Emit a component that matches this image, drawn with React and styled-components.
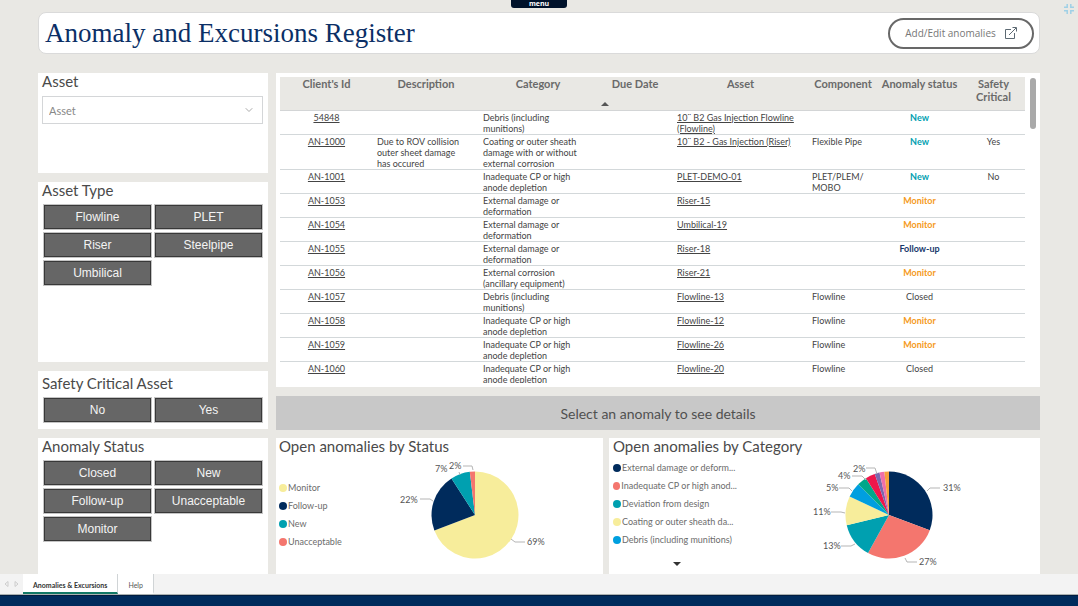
import React from "react";
import styled, { createGlobalStyle } from "styled-components";
import { ChevronDown } from "lucide-react";

const humanist = `Lato, "Trebuchet MS", "Noto Sans", sans-serif`;
const navy = "#002b5c";

const GlobalStyle = createGlobalStyle`
  * { box-sizing: border-box; }
  body { margin: 0; background: #e9e8e4; font-family: ${humanist}; color: #444; }
  button, select { font-family: inherit; }
`;

const Page = styled.div`
  min-height: 100vh;
  display: flex;
  flex-direction: column;
`;

const TopStrip = styled.div`
  height: 12px;
  display: grid;
  grid-template-columns: 1fr auto 1fr;
  align-items: start;
`;

const MenuTab = styled.button`
  width: 56px;
  height: 8px;
  padding: 0;
  border: 0;
  border-radius: 0 0 3px 3px;
  background: #00122b;
  color: #fff;
  font: bold 7px/6px "Open Sans", sans-serif;
`;

const CollapseButton = styled.button`
  justify-self: end;
  display: flex;
  padding: 4px 4px 0;
  border: 0;
  background: none;
`;

const Header = styled.header`
  margin: 0 38px 19px;
  height: 42px;
  padding: 0 5px 0 6px;
  display: flex;
  align-items: center;
  justify-content: space-between;
  background: #fff;
  border: 1px solid #dadada;
  border-radius: 8px;
`;

const Title = styled.h1`
  margin: 0;
  font: 400 27px/40px "Liberation Serif", serif;
  color: #0b2f66;
`;

const EditButton = styled.button`
  height: 31px;
  width: 146px;
  display: flex;
  align-items: center;
  justify-content: center;
  gap: 8px;
  border: 2px solid #686868;
  border-radius: 16px;
  background: #fff;
  color: #777;
  font: 400 10px/14px "Open Sans", sans-serif;
  padding: 0;
  white-space: nowrap;
`;

const Main = styled.main`
  flex: 1;
  display: grid;
  grid-template-columns: 230px minmax(0, 1fr);
  gap: 8px;
  padding: 0 38px;
`;

const Filters = styled.div`
  display: flex;
  flex-direction: column;
  gap: 9px;
`;

const Report = styled.div`
  display: flex;
  flex-direction: column;
`;

const Panel = styled.section`
  background: #fff;
  min-height: ${(p) => p.$min || 0}px;
  padding: ${(p) => p.$top || 0}px 4px 0;
  flex-grow: ${(p) => (p.$grow ? 1 : 0)};
`;

const PanelTitle = styled.h2`
  display: block;
  margin: 0 0 6px;
  font-size: 15px;
  line-height: 17px;
  font-weight: 400;
  color: #4a4a4a;
  white-space: nowrap;
`;

const SelectBox = styled.div`
  position: relative;
  margin-right: 1px;
  color: #aaa;
  svg {
    position: absolute;
    right: 8px;
    top: 8px;
    pointer-events: none;
  }
`;

const Select = styled.select`
  appearance: none;
  display: block;
  width: 100%;
  height: 28px;
  padding: 0 6px;
  border: 1px solid #d4d6d8;
  border-radius: 0;
  background: #fff;
  color: #888;
  font-size: 11px;
`;

const Slicer = styled.div`
  display: grid;
  grid-template-columns: 1fr 1fr;
  gap: 4px;
  padding: 0 2px;
`;

const SlicerButton = styled.button`
  height: 24px;
  padding: 0;
  border: 1px solid #383838;
  outline: 1px solid #c4c4c4;
  outline-offset: 0;
  background: #666;
  color: #f4f4f4;
  font: 400 12px/20px "Liberation Sans", sans-serif;
`;

const TablePanel = styled.section`
  display: flex;
  gap: 5px;
  height: 314px;
  padding: 4px;
  background: #fff;
`;

const TableScroll = styled.div`
  flex: 1;
  min-width: 0;
  overflow: hidden;
`;

const ScrollTrack = styled.div`
  width: 6px;
  margin-top: 1px;
`;

const ScrollThumb = styled.div`
  height: 51px;
  border-radius: 3px;
  background: #a9a9a9;
`;

const Table = styled.table`
  width: 100%;
  table-layout: fixed;
  border-collapse: collapse;
  font-size: 9px;
  line-height: 11px;
`;

const HeadCell = styled.th`
  height: 33px;
  padding: 0;
  vertical-align: top;
  background: #e9e8e4;
  border-bottom: 1px solid #d3d5d6;
  color: #6a6a6a;
  font-size: 11px;
  line-height: 13px;
  font-weight: 700;
`;

const SortMark = styled.span`
  display: block;
  width: 0;
  margin: 12px 0 0 4px;
  border: 4px solid transparent;
  border-top: 0;
  border-bottom: 4px solid #555;
`;

const statusColors = { New: "#00a0b0", Monitor: "#f59b23", "Follow-up": "#17386b", Closed: "#444" };

const Cell = styled.td`
  padding: ${(p) => (p.$center ? "1px 4px 0" : "1px 10px 0 4px")};
  vertical-align: top;
  border-bottom: 1px solid #d3d8da;
  text-align: ${(p) => (p.$center ? "center" : "left")};
  color: ${(p) => p.$color || "#444"};
  font-weight: ${(p) => (p.$strong ? 700 : 400)};
`;

const CellLink = styled.a`
  color: #444;
  text-decoration: underline;
`;

const DetailsButton = styled.button`
  margin: 9px 0 8px;
  height: 34px;
  padding: 0;
  border: 0;
  background: #c8c8c8;
  color: #505050;
  font-size: 14px;
`;

const Charts = styled.div`
  flex: 1;
  display: grid;
  grid-template-columns: 327fr 431fr;
  gap: 6px;
`;

const ChartPanel = styled.section`
  display: flex;
  flex-direction: column;
  padding: 0 0 0 ${(p) => p.$inset}px;
  background: #fff;
`;

const ChartTitle = styled(PanelTitle)`
  margin: 0;
`;

const ChartBody = styled.div`
  display: flex;
  flex: 1;
`;

const Legend = styled.div`
  width: ${(p) => p.$width}px;
  padding-top: ${(p) => p.$top}px;
`;

const LegendList = styled.ul`
  margin: 0;
  padding: 0;
  list-style: none;
  font-size: 9px;
  line-height: 18px;
  color: #6c6c6c;
`;

const LegendItem = styled.li`
  display: flex;
  align-items: center;
  gap: 1px;
  white-space: nowrap;
  &::before {
    content: "";
    width: 8px;
    height: 8px;
    border-radius: 50%;
    background: ${(p) => p.$color};
  }
`;

const MoreButton = styled.button`
  display: block;
  margin: 13px 0 0 60px;
  padding: 0;
  border: 4px solid transparent;
  border-bottom: 0;
  border-top: 4px solid #333;
  width: 0;
  height: 0;
  background: none;
`;

const PieBox = styled.div`
  flex: 1;
  display: flex;
  justify-content: center;
  align-items: flex-start;
  text {
    font-size: 9px;
    fill: #555;
  }
`;

const Tabs = styled.nav`
  height: 21px;
  display: flex;
  background: #f3f3f3;
  border-bottom: 1px solid #aab0b0;
`;

const TabArrows = styled.div`
  width: 23px;
  display: flex;
  align-items: center;
  justify-content: space-evenly;
`;

const Tab = styled.a`
  padding: 0 10px;
  border-right: 1px solid #d0d4d6;
  border-bottom: 2px solid ${(p) => (p.$active ? "#117865" : "#fff")};
  background: #fff;
  color: ${(p) => (p.$active ? "#333" : "#555")};
  font-size: 7px;
  font-weight: ${(p) => (p.$active ? 700 : 400)};
  line-height: 22px;
  text-decoration: none;
`;

const Footer = styled.footer`
  height: 11px;
  background: ${navy};
  border-top: 1px solid #001c40;
`;

const columns = [93, 106, 118, 76, 135, 70, 83, 65];
const headings = ["Client's Id", "Description", "Category", "Due Date", "Asset", "Component", "Anomaly status", "Safety Critical"];
const cp = "Inadequate CP or high anode depletion";
const ext = "External damage or deformation";
const rows = [
  ["54848", "", "Debris (including munitions)", "10¨ B2 Gas Injection Flowline (Flowline)", "", "New", ""],
  ["AN-1000", "Due to ROV collision outer sheet damage has occured", "Coating or outer sheath damage with or without external corrosion", "10¨ B2 - Gas Injection (Riser)", "Flexible Pipe", "New", "Yes"],
  ["AN-1001", "", cp, "PLET-DEMO-01", "PLET/PLEM/ MOBO", "New", "No"],
  ["AN-1053", "", ext, "Riser-15", "", "Monitor", ""],
  ["AN-1054", "", ext, "Umbilical-19", "", "Monitor", ""],
  ["AN-1055", "", ext, "Riser-18", "", "Follow-up", ""],
  ["AN-1056", "", "External corrosion (ancillary equipment)", "Riser-21", "", "Monitor", ""],
  ["AN-1057", "", "Debris (including munitions)", "Flowline-13", "Flowline", "Closed", ""],
  ["AN-1058", "", cp, "Flowline-12", "Flowline", "Monitor", ""],
  ["AN-1059", "", cp, "Flowline-26", "Flowline", "Monitor", ""],
  ["AN-1060", "", cp, "Flowline-20", "Flowline", "Closed", ""],
];

const byStatus = {
  legend: ["Monitor", "Follow-up", "New", "Unacceptable"],
  slices: [["#f7ed9b", 69.2], [navy, 21.7], ["#00a0b0", 7.2], ["#f4766e", 1.9]],
  lines: ["M124 84 L128 87 H138", "M33 44 H43 L46 46", "M73 20 L72 17", "M76 11 H85 L86 15"],
  labels: [["69%", 140, 90], ["22%", 13, 48], ["7%", 48, 17], ["2%", 62, 14]],
};

const byCategory = {
  legend: ["External damage or deform...", "Inadequate CP or high anod...", "Deviation from design", "Coating or outer sheath da...", "Debris (including munitions)"],
  slices: [[navy, 30.7], ["#f4766e", 27.3], ["#00a0b0", 13.2], ["#f7ed9b", 10.8], ["#009fdf", 5.5], ["#00a78a", 3.6], ["#ee164b", 3.6], ["#7b68ae", 1.8], ["#f06fa8", 1.8], ["#f7a03c", 1.7]],
  lines: ["M126 36 L129 33 H139", "M104 103 L106 107 H116", "M54 89 L50 91 H40", "M44 58 L40 57 H30", "M51 36 L48 33 H38", "M65 25 L61 21 H51", "M76 19 L74 13 H65"],
  labels: [["31%", 142, 36], ["27%", 118, 110], ["13%", 22, 94], ["11%", 12, 60], ["5%", 25, 36], ["4%", 37, 24], ["2%", 52, 17]],
};

function Pie({ data, title }) {
  const cx = 88;
  const cy = 60;
  const r = 43.5;
  const total = data.slices.reduce((sum, s) => sum + s[1], 0);
  let at = 0;
  const point = (v) => {
    const a = (v / total) * Math.PI * 2;
    return `${cx + r * Math.sin(a)} ${cy - r * Math.cos(a)}`;
  };
  return (
    <svg width="176" height="118" role="img" aria-label={title}>
      {data.slices.map(([color, value]) => {
        const from = at;
        at += value;
        return <path key={color} fill={color} d={`M${cx} ${cy} L${point(from)} A${r} ${r} 0 ${value > total / 2 ? 1 : 0} 1 ${point(at)} Z`} />;
      })}
      {data.lines.map((d) => <path key={d} d={d} fill="none" stroke="#b5b5b5" />)}
      {data.labels.map(([text, x, y]) => <text key={text} x={x} y={y}>{text}</text>)}
    </svg>
  );
}

function Chart({ title, data, inset, legendWidth, legendTop, more }) {
  return (
    <ChartPanel $inset={inset}>
      <ChartTitle>{title}</ChartTitle>
      <ChartBody>
        <Legend $width={legendWidth} $top={legendTop}>
          <LegendList>
            {data.legend.map((label, i) => <LegendItem key={label} $color={data.slices[i][0]}>{label}</LegendItem>)}
          </LegendList>
          {more && <MoreButton aria-label="More categories" />}
        </Legend>
        <PieBox><Pie data={data} title={title} /></PieBox>
      </ChartBody>
    </ChartPanel>
  );
}

function ButtonSlicer({ title, options, ...panel }) {
  return (
    <Panel {...panel}>
      <PanelTitle>{title}</PanelTitle>
      <Slicer>
        {options.map((o) => <SlicerButton key={o}>{o}</SlicerButton>)}
      </Slicer>
    </Panel>
  );
}

export default function App() {
  return (
    <Page>
      <GlobalStyle />
      <TopStrip>
        <span />
        <MenuTab>menu</MenuTab>
        <CollapseButton aria-label="Exit full screen">
          <svg width="10" height="10" fill="none" stroke="#9fd0e6" strokeWidth="1.5">
            <path d="M0 3.2h3.2V0M6.8 0v3.2H10M0 6.8h3.2V10M6.8 10V6.8H10" />
          </svg>
        </CollapseButton>
      </TopStrip>
      <Header>
        <Title>Anomaly and Excursions Register</Title>
        <EditButton>
          Add/Edit anomalies
          <svg width="13" height="13" viewBox="0 0 13 13" fill="none" stroke="#5d6a73">
            <path d="M7 2.5H1.5v9h9V6M5 8l7-7M8.5 .5h4v4" />
          </svg>
        </EditButton>
      </Header>
      <Main>
        <Filters>
          <Panel $min={100}>
            <PanelTitle as="label" htmlFor="asset">Asset</PanelTitle>
            <SelectBox>
              <Select id="asset" defaultValue="Asset"><option>Asset</option></Select>
              <ChevronDown size={12} strokeWidth={2} />
            </SelectBox>
          </Panel>
          <ButtonSlicer $min={180} title="Asset Type" options={["Flowline", "PLET", "Riser", "Steelpipe", "Umbilical"]} />
          <ButtonSlicer $min={58} $top={4} title="Safety Critical Asset" options={["No", "Yes"]} />
          <ButtonSlicer $grow title="Anomaly Status" options={["Closed", "New", "Follow-up", "Unacceptable", "Monitor"]} />
        </Filters>
        <Report>
          <TablePanel>
            <TableScroll>
              <Table>
                <colgroup>{columns.map((w, i) => <col key={i} width={w} />)}</colgroup>
                <thead>
                  <tr>
                    {headings.map((h) => <HeadCell key={h}>{h}{h === "Due Date" && <SortMark />}</HeadCell>)}
                  </tr>
                </thead>
                <tbody>
                  {rows.map(([id, description, category, asset, component, status, safety]) => (
                    <tr key={id}>
                      <Cell $center><CellLink href="#">{id}</CellLink></Cell>
                      <Cell>{description}</Cell>
                      <Cell>{category}</Cell>
                      <Cell />
                      <Cell><CellLink href="#">{asset}</CellLink></Cell>
                      <Cell>{component}</Cell>
                      <Cell $center $color={statusColors[status]} $strong={status !== "Closed"}>{status}</Cell>
                      <Cell $center>{safety}</Cell>
                    </tr>
                  ))}
                </tbody>
              </Table>
            </TableScroll>
            <ScrollTrack><ScrollThumb /></ScrollTrack>
          </TablePanel>
          <DetailsButton>Select an anomaly to see details</DetailsButton>
          <Charts>
            <Chart title="Open anomalies by Status" data={byStatus} inset={3} legendWidth={67} legendTop={24} />
            <Chart title="Open anomalies by Category" data={byCategory} inset={4} legendWidth={124} legendTop={4} more />
          </Charts>
        </Report>
      </Main>
      <Tabs>
        <TabArrows>
          <svg width="5" height="6" fill="none" stroke="#ccc"><path d="M4 .5v5L1 3z" /></svg>
          <svg width="5" height="6" fill="none" stroke="#ccc"><path d="M1 .5v5L4 3z" /></svg>
        </TabArrows>
        <Tab href="#" $active>Anomalies &amp; Excursions</Tab>
        <Tab href="#">Help</Tab>
      </Tabs>
      <Footer />
    </Page>
  );
}
